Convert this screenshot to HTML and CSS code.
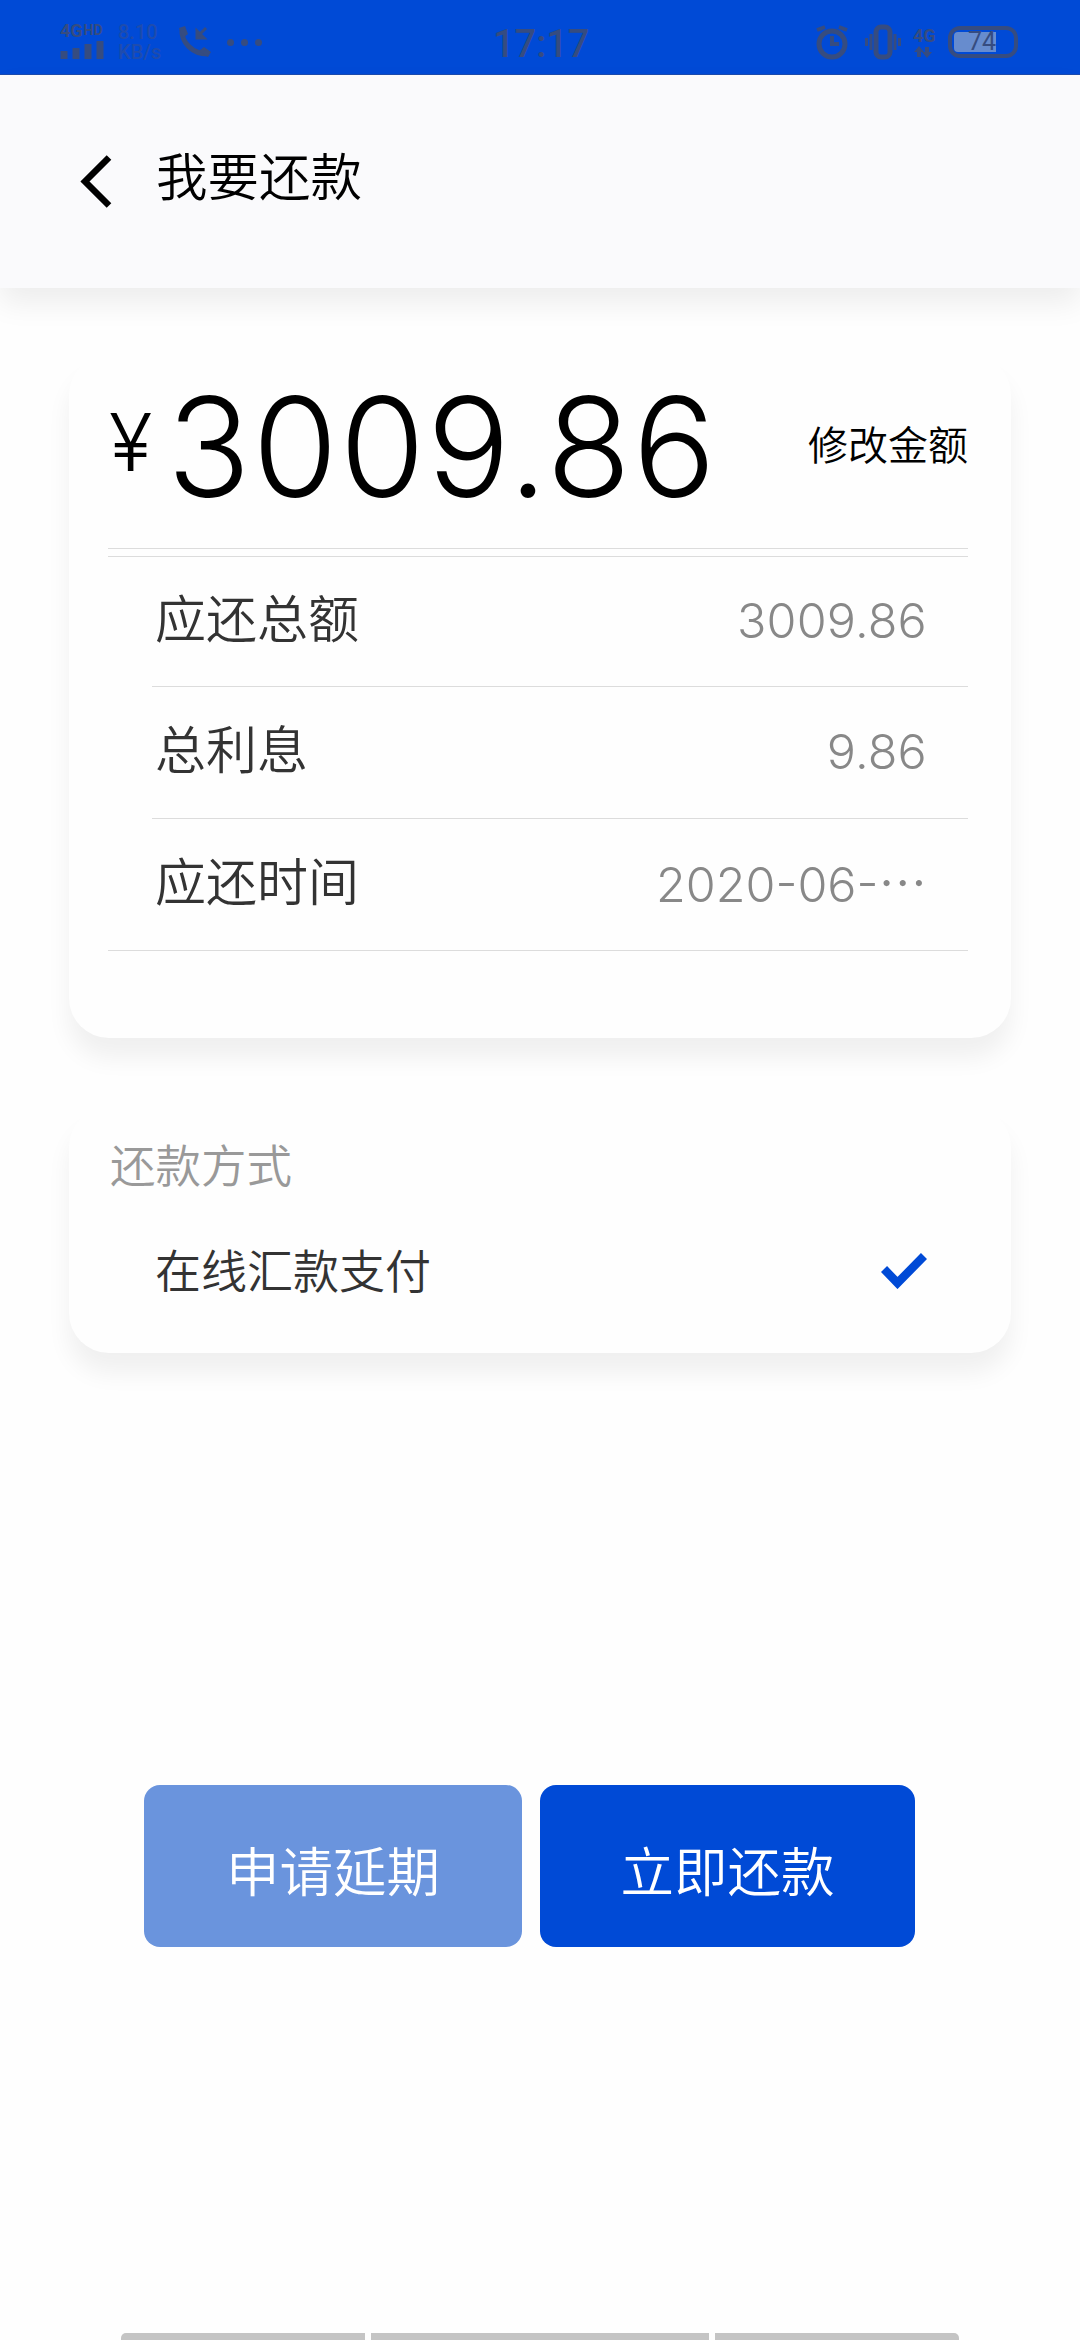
FILE: index.html
```html
<!DOCTYPE html>
<html lang="zh-CN">

<head>
    <meta charset="utf-8">
    <title>我要还款</title>
    <link rel="stylesheet" href="styles.css">
</head>

<body>
    <div class="status-bar">
        <div class="network">
            <div class="network-type"><span>4G</span><small>HD</small></div>
            <svg width="46" height="22" viewBox="0 0 46 22">
                <path d="M4 12v8M16 9v11M28 5v15M40 2v18" stroke="currentColor" stroke-width="7" />
            </svg>
        </div>
        <div class="speed"><span>8.10</span><span>KB/s</span></div>
        <svg class="phone" width="34" height="34" viewBox="0 0 34 34">
            <path d="M4 4C3 17 14 29 30 29" fill="none" stroke="currentColor" stroke-width="5" />
            <path d="M1 3l6-2 3 8-5 4zM21 26l5-4 7 5-3 5z" fill="currentColor" />
            <path d="M28 3l-8 8M19 6v7h7z" fill="currentColor" stroke="currentColor" stroke-width="3" />
        </svg>
        <div class="dots"><i></i><i></i><i></i></div>
        <div class="time">17:17</div>
        <svg class="alarm" width="34" height="36" viewBox="0 0 34 36">
            <g fill="none" stroke="currentColor" stroke-width="5">
                <circle cx="17" cy="20" r="13" />
                <path d="M17 12v8h7M2 6l8-3M32 6l-8-3" stroke-width="4" />
            </g>
        </svg>
        <svg class="vibrate" width="36" height="36" viewBox="0 0 36 36">
            <g fill="none" stroke="currentColor">
                <rect x="11" y="3" width="14" height="30" rx="5" stroke-width="5" />
                <path d="M6 10v16M30 10v16M1.500 14v8M34.500 14v8" stroke-width="3" />
            </g>
        </svg>
        <div class="data">
            <span>4G</span>
            <svg width="20" height="12" viewBox="0 0 20 12">
                <path d="M6 0l5 6H8v5H4V6H1zM14 12l-5-6h3V1h4v5h3z" fill="currentColor" />
            </svg>
        </div>
        <div class="battery">
            <div class="battery-level"><span>74</span></div>
        </div>
    </div>

    <header class="header">
        <svg class="back" width="32" height="54" viewBox="0 0 32 54">
            <path d="M29 2.500L5 26.500l24 24" fill="none" stroke="#000" stroke-width="6.500" />
        </svg>
        <h1>我要还款</h1>
    </header>

    <main>
        <section class="card amount-card">
            <div class="amount">
                <span class="symbol">¥</span>
                <span class="number">3009.86</span>
                <a class="edit">修改金额</a>
            </div>
            <ul class="list">
                <li><span>应还总额</span><em>3009.86</em></li>
                <li><span>总利息</span><em>9.86</em></li>
                <li><span>应还时间</span><em class="date">2020-06-<b>…</b></em></li>
            </ul>
        </section>

        <section class="card pay-card">
            <h2>还款方式</h2>
            <div class="pay-item">
                <span>在线汇款支付</span>
                <svg width="46" height="36" viewBox="0 0 46 36">
                    <path d="M3 16l13.500 14L43 3" fill="none" stroke="#004ad6" stroke-width="8.500" />
                </svg>
            </div>
        </section>

        <div class="buttons">
            <button class="btn btn-delay">申请延期</button>
            <button class="btn btn-pay">立即还款</button>
        </div>
    </main>

    <div class="nav-hint"><i></i><i class="middle"></i><i></i></div>
</body>

</html>
```
FILE: styles.css
```css
* {
    box-sizing: border-box;
}

body {
    margin: 0;
    width: 1080px;
    height: 2340px;
    overflow: hidden;
    display: flex;
    flex-direction: column;
    background: #fefefe;
    color: #000;
    font-family: Inter, "Noto Sans CJK SC", sans-serif;
    font-weight: 350;
}

h1, h2, ul {
    margin: 0;
    padding: 0;
    font-weight: 350;
}

svg {
    display: block;
    flex: none;
}

/* status bar */
.status-bar {
    flex: none;
    display: flex;
    align-items: center;
    height: 75px;
    padding: 10px 62px 0 60px;
    background: #004ad6;
    border-bottom: 1px solid #1c4bae;
    color: #364c80;
    font-family: Roboto, sans-serif;
}
.network {
    width: 46px;
}
.network-type {
    display: flex;
    gap: 1px;
    height: 16px;
    font-size: 18px;
    line-height: 16px;
    font-weight: 700;
}
.network-type small {
    font-size: 14px;
    line-height: 14px;
}
.speed {
    display: flex;
    flex-direction: column;
    width: 46px;
    margin-left: 12px;
    font-size: 20px;
    line-height: 20px;
    font-weight: 500;
    color: #1e4cae;
}
.phone {
    margin-left: 14px;
}
.dots {
    display: flex;
    gap: 7px;
    margin-left: 15px;
}
.dots i {
    width: 7px;
    height: 7px;
    border-radius: 4px;
    background: currentColor;
}
.time {
    width: 94px;
    margin-left: 231px;
    padding-top: 3px;
    font-size: 38px;
    line-height: 38px;
    font-weight: 500;
}
.alarm {
    margin-left: auto;
}
.vibrate {
    margin-left: 16px;
}
.data {
    width: 24px;
    margin: 0 11px 0 12px;
    font-size: 18px;
    line-height: 20px;
    font-weight: 700;
}
.data span {
    display: block;
}
.battery {
    width: 70px;
    height: 32px;
    padding: 2px;
    border: 4px solid currentColor;
    border-radius: 12px;
}
.battery-level {
    width: 42px;
    height: 20px;
    background: #678cce;
    border-radius: 4px 0 0 4px;
    font-size: 25px;
    line-height: 20px;
    font-weight: 400;
    text-align: right;
}

/* title bar */
.header {
    flex: none;
    display: flex;
    align-items: center;
    height: 213px;
    padding: 0 0 0 80px;
    background: #fafafc;
    box-shadow: 0 15px 28px rgba(0, 0, 0, 0.07);
}
.header h1 {
    margin: -9px 0 0 44px;
    font-size: 51.500px;
    line-height: 60px;
}

.card {
    width: 942px;
    margin: 0 auto;
    background: #fefefe;
    border-radius: 40px;
    box-shadow: 0 20px 24px rgba(0, 0, 0, 0.06);
}
.amount-card {
    height: 683px;
    margin-top: 67px;
    padding: 0 43px 0 39px;
}
.amount {
    display: flex;
    align-items: center;
    height: 194px;
    padding-bottom: 9px;
    border-bottom: 1px solid #dcdcdc;
}
.symbol {
    width: 52px;
    padding: 0 0 10px 1px;
    font-size: 80px;
    font-weight: 300;
    line-height: 80px;
}
.number {
    margin-left: 7px;
    font-size: 138px;
    font-weight: 300;
    letter-spacing: 2px;
    line-height: 140px;
}
.edit {
    margin-left: auto;
    padding-bottom: 3px;
    font-size: 40px;
    line-height: 50px;
}

.list {
    margin-top: 7px;
    border-top: 1px solid #dcdcdc;
    border-bottom: 1px solid #dcdcdc;
    list-style: none;
}
.list li {
    display: flex;
    justify-content: space-between;
    align-items: center;
    height: 129px;
    margin-left: 44px;
    padding: 0 41px 8px 0;
    color: #333;
    font-size: 51px;
}
.list li + li {
    height: 132px;
    border-top: 1px solid #dcdcdc;
}
.list span {
    padding: 0 0 4px 3px;
}
.list em {
    padding-top: 5px;
    color: #888;
    font-size: 48.500px;
    font-style: normal;
    font-weight: 300;
    letter-spacing: 0.200px;
}
.list .date {
    padding-top: 0;
    font-feature-settings: "case";
    letter-spacing: 0;
}
.list b {
    font-family: "Noto Sans CJK SC", sans-serif;
    font-weight: 350;
}

.pay-card {
    height: 246px;
    margin-top: 69px;
    padding: 28px 84px 0 41px;
    color: #333;
}
.pay-card h2 {
    color: #999;
    font-size: 45.500px;
    line-height: 64px;
}
.pay-item {
    display: flex;
    justify-content: space-between;
    align-items: center;
    height: 64px;
    margin-top: 40px;
    padding-left: 45px;
    font-size: 46px;
}
.pay-item span {
    padding-bottom: 6px;
}

.buttons {
    display: flex;
    gap: 18px;
    margin: 432px 0 0 144px;
}
.btn {
    width: 378px;
    height: 162px;
    padding: 4px 0 0;
    border: 0;
    border-radius: 16px;
    color: #fff;
    font-family: inherit;
    font-size: 53.500px;
    font-weight: 350;
}
.btn-delay {
    background: #6a94dd;
}
.btn-pay {
    width: 375px;
    background: #004ad6;
}

/* system gesture strip */
.nav-hint {
    display: flex;
    gap: 6px;
    width: 838px;
    height: 7px;
    margin: auto auto 0;
    overflow: hidden;
    border-radius: 5px 5px 0 0;
}
.nav-hint i {
    width: 244px;
    background: #c4c4c4;
}
.nav-hint .middle {
    width: 338px;
}
```
